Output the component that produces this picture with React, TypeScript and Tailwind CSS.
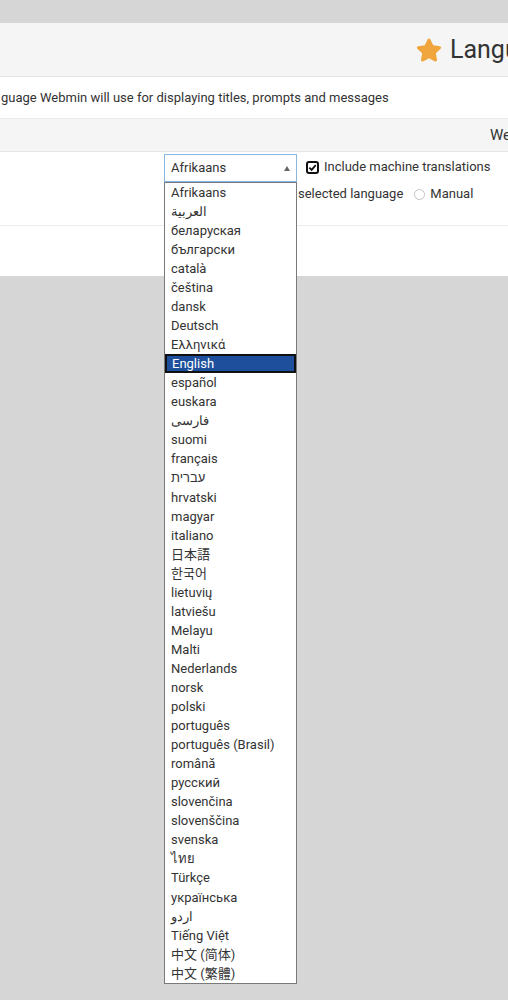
import { FaStar } from "react-icons/fa";

const languages = [
  "Afrikaans",
  "العربية",
  "беларуская",
  "български",
  "català",
  "čeština",
  "dansk",
  "Deutsch",
  "Ελληνικά",
  "English",
  "español",
  "euskara",
  "فارسی",
  "suomi",
  "français",
  "עברית",
  "hrvatski",
  "magyar",
  "italiano",
  "日本語",
  "한국어",
  "lietuvių",
  "latviešu",
  "Melayu",
  "Malti",
  "Nederlands",
  "norsk",
  "polski",
  "português",
  "português (Brasil)",
  "română",
  "русский",
  "slovenčina",
  "slovenščina",
  "svenska",
  "ไทย",
  "Türkçe",
  "українська",
  "اردو",
  "Tiếng Việt",
  "中文 (简体)",
  "中文 (繁體)",
];

const LanguageSelect = () => {
  return (
    <div className="relative w-[133px] h-[28px]">
      <div className="h-full flex items-center justify-between border border-[#8bb8e2] bg-white pl-[6px] pr-[6px] text-[13px] text-[#333]">
        <span>Afrikaans</span>
        <svg width="6" height="5" viewBox="0 0 6 5">
          <path d="M3 0 L6 5 L0 5 Z" fill="#666" />
        </svg>
      </div>
      <ul className="absolute top-full left-0 z-10 w-[133px] border border-[#7a7a7a] bg-white text-[13px] text-[#333]">
        {languages.map((lang) =>
          lang === "English" ? (
            <li
              key={lang}
              className="h-[19.05px] flex items-center pl-[5px] bg-[#1d4f9c] text-white border-2 border-[#111]"
            >
              {lang}
            </li>
          ) : (
            <li key={lang} className="h-[19.05px] flex items-center pl-[6px]">
              {lang}
            </li>
          )
        )}
      </ul>
    </div>
  );
};

export default function App() {
  return (
    <div className="min-h-screen bg-[#d6d6d6] pt-[23px] overflow-hidden font-[Roboto,'Noto_Sans','Noto_Sans_CJK_JP','Noto_Sans_CJK_KR',sans-serif] text-[#333]">
      <div className="bg-white h-[253px] whitespace-nowrap">
        <div className="h-[54px] bg-[#f5f5f5] border-b border-[#e3e3e3] flex items-center pl-[416px] gap-[8px] overflow-hidden">
          <FaStar className="text-[#f0a63c] w-[26px] h-[26px] shrink-0" />
          <h1 className="text-[25px] leading-none">Language</h1>
        </div>
        <div className="h-[42px] border-b border-[#ececec] flex items-center pl-[1px] text-[13px]">
          guage Webmin will use for displaying titles, prompts and messages
        </div>
        <div className="h-[33px] bg-[#f5f5f5] border-b border-[#e6e6e6] flex items-center pl-[490px] text-[15px] overflow-hidden">
          Webmin
        </div>
        <div className="h-[74px] border-b border-[#ececec] pt-[2px] text-[13px]">
          <div className="flex items-center pl-[164px]">
            <LanguageSelect />
            <label className="flex items-center ml-[9px] gap-[5px] -mt-[2px]">
              <span className="w-[13px] h-[13px] border-2 border-[#111] rounded-[3px] flex items-center justify-center">
                <svg width="9" height="9" viewBox="0 0 10 10">
                  <path d="M1.5 5.2 L4 7.6 L8.6 2.4" fill="none" stroke="#111" strokeWidth="2" />
                </svg>
              </span>
              Include machine translations
            </label>
          </div>
          <div className="h-[24px] flex items-center pl-[298px]">
            <span>selected language</span>
            <span className="ml-[11px] w-[11px] h-[11px] rounded-full border border-[#c4c4c4]" />
            <span className="ml-[5px]">Manual</span>
          </div>
        </div>
      </div>
    </div>
  );
}
